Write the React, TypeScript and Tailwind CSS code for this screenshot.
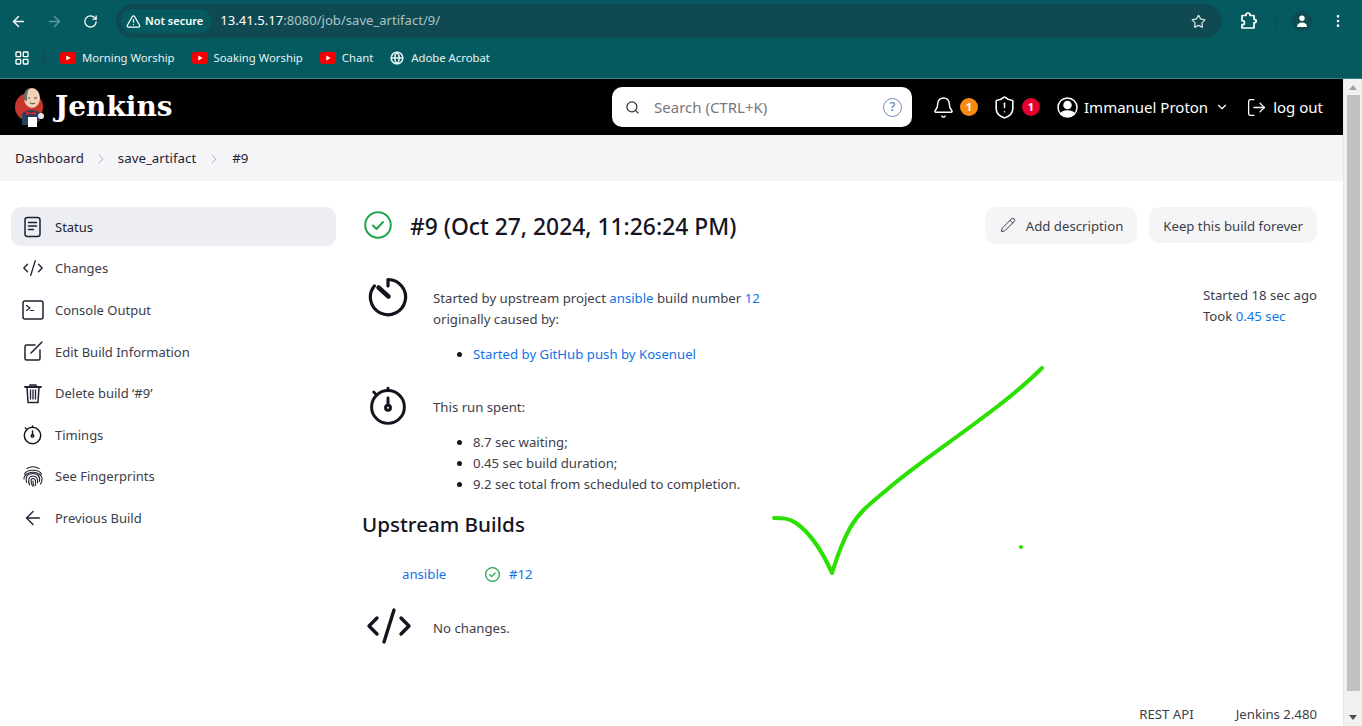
import { ArrowLeft, ArrowRight, RotateCw, TriangleAlert, Star, EllipsisVertical, LayoutGrid, Globe, Search, ChevronDown, ChevronRight, Bell, ShieldAlert, LogOut, CodeXml, Pencil } from 'lucide-react'

const font = "font-['Noto_Sans','Open_Sans',sans-serif]"

function YouTube() {
  return (
    <svg width="16" height="12" viewBox="0 0 16 12" className="shrink-0">
      <rect width="16" height="12" rx="3" fill="#f40000" />
      <path d="M6.3 3.4v5.2L10.6 6z" fill="#fff" />
    </svg>
  )
}

function Bookmark({ label }: { label: string }) {
  return (
    <div className="flex items-center gap-[6px] text-[11.3px] text-[#e6f2f2]">
      <YouTube />
      <span>{label}</span>
    </div>
  )
}

function Svg22({ children }: { children: React.ReactNode }) {
  return (
    <svg width="22" height="22" viewBox="0 0 22 22" fill="none" stroke="#1f2230" strokeWidth="1.500" strokeLinecap="round" strokeLinejoin="round">
      {children}
    </svg>
  )
}

function ConsoleIcon() {
  return (
    <Svg22>
      <rect x="1" y="2" width="20" height="18" rx="2" />
      <path d="M4.500 6.500 8 9 4.500 11.500M8.500 11.500h3" strokeWidth="1.200" />
    </Svg22>
  )
}

function StatusIcon() {
  return (
    <Svg22>
      <rect x="3" y="1.500" width="15" height="19" rx="2.500" />
      <path d="M6.500 6.500h8M6.500 10h8M6.500 13.500h5" />
    </Svg22>
  )
}

function EditIcon() {
  return (
    <Svg22>
      <path d="M13 5H4.500A1.500 1.500 0 0 0 3 6.500v12A1.500 1.500 0 0 0 4.500 20h12a1.500 1.500 0 0 0 1.500-1.500V10" />
      <path d="M9 13 20 2" />
    </Svg22>
  )
}

function TrashIcon() {
  return (
    <Svg22>
      <path d="M3 5h16" strokeWidth="1.800" />
      <path d="M8 5V3h6v2" />
      <path d="M5 5l1 15.500h10L17 5" />
      <path d="M8.500 8v9M11 8v9M13.500 8v9" strokeWidth="1.300" />
    </Svg22>
  )
}

function FingerprintIcon() {
  return (
    <Svg22>
      <g strokeWidth="1.100">
        <path d="M5 3.500c3.500-2 8.500-2 12 0" />
        <path d="M2.500 9C5 4 17 4 19.500 9" />
        <path d="M2 14c0-9 18-9 18 0 0 2-.5 4-1.500 5" />
        <path d="M4.500 17.500C3 10 7 8.500 11 8.500s7.500 2 6.500 8" />
        <path d="M7.500 20C5.500 15 7 11 11 11s5 3 4.500 7" />
        <path d="M10.500 21C8.500 17 8.500 13.500 11 13.500s3 3 2.500 7" />
        <path d="M11 16c0 2 .5 4 1 5" />
      </g>
    </Svg22>
  )
}

function Stopwatch({ size, stroke = 32 }: { size: number; stroke?: number }) {
  return (
    <svg width={size} height={size} viewBox="0 0 512 512" fill="none" stroke="#14141f" strokeWidth={stroke} strokeLinecap="round">
      <circle cx="256" cy="280" r="200" />
      <path d="M256 80V50M100 116l-18-18M256 170v90" />
      <circle cx="256" cy="290" r="30" />
    </svg>
  )
}

function Timer() {
  return (
    <svg width="42" height="42" viewBox="0 0 42 42" fill="none" stroke="#14141f" strokeWidth="3.200" strokeLinecap="round">
      <path d="M21 3.500a17.600 17.600 0 1 1-13.600 6.400" />
      <path d="M21 4v6" />
      <path d="M11.500 11.500 21.500 20.500" strokeWidth="4.500" />
    </svg>
  )
}

function SideItem({ icon, label, active }: { icon: React.ReactNode; label: string; active?: boolean }) {
  return (
    <div className={`flex h-[39px] items-center rounded-[10px] pl-[11px] text-[13px] ${active ? 'bg-[#eceef3] text-[#1f2230]' : 'text-[#3c3e4a]'}`}>
      <div className="flex w-[33px] justify-start">{icon}</div>
      <span className="mt-[2px]">{label}</span>
    </div>
  )
}

function CheckCircle({ size, w }: { size: number; w: number }) {
  return (
    <svg width={size} height={size} viewBox="0 0 28 28" fill="none" stroke="#1ea64b" strokeWidth={w} strokeLinecap="round" strokeLinejoin="round">
      <circle cx="14" cy="14" r="12.800" />
      <path d="M9 14.500l3.500 3.500 6.500-7" />
    </svg>
  )
}

export default function App() {
  const link = 'text-[#1173e6]'
  return (
    <div className={`${font} relative flex h-[726px] w-[1362px] flex-col overflow-hidden bg-white`}>
      {/* browser chrome */}
      <div className="h-[79px] shrink-0 border-b border-[#3c8287] bg-[#055a60] text-white">
        <div className="flex h-[41px] items-center pt-[1px]">
          <div className="flex w-[116px] items-center pl-[10px]">
            <ArrowLeft size={17} strokeWidth={2} />
            <ArrowRight size={17} strokeWidth={2} className="ml-[19px] text-[#5f9a9d]" />
            <RotateCw size={15} strokeWidth={2} className="ml-[20px]" />
          </div>
          <div className="flex h-[34px] w-[1106px] items-center rounded-full bg-[#0f4a52] pl-[5px] pr-[16px]">
            <div className="flex h-[24px] items-center gap-[4px] rounded-full bg-[#055a60] pl-[5px] pr-[8px] text-[11px] font-semibold">
              <TriangleAlert size={15} />
              <span>Not secure</span>
            </div>
            <span className="ml-[9px] text-[13.100px]">13.41.5.17<span className="text-[#a9c4c6]">:8080/job/save_artifact/9/</span></span>
            <Star size={15} className="ml-auto text-[#d6e2e3]" />
          </div>
          <div className="flex flex-1 items-center pl-[18px]">
            <svg width="18" height="18" viewBox="0 0 18 18" fill="none" stroke="#fff" strokeWidth="1.700" strokeLinejoin="round">
              <path d="M6 3.500V3a2 2 0 0 1 4 0v.5h4v3.800h.5a1.700 1.700 0 0 1 0 3.400H14V16H2v-3.300h.5a2 2 0 0 0 0-4H2V3.500z" />
            </svg>
            <div className="ml-[17px] h-[16px] w-px bg-[#0f4a52]" />
            <div className="ml-[16px] flex h-[20px] w-[20px] items-center justify-center rounded-full bg-[#0f4a52]">
              <svg width="12" height="12" viewBox="0 0 12 12" fill="#fff"><circle cx="6" cy="3.200" r="2.700" /><path d="M1 12c0-3 2-4.500 5-4.500s5 1.500 5 4.500z" /></svg>
            </div>
            <EllipsisVertical size={16} className="ml-[18px]" />
          </div>
        </div>
        <div className="flex h-[34px] items-center pl-[14px]">
          <LayoutGrid size={16} />
          <div className="ml-[14px] h-[16px] w-px bg-[#0f4a52]" />
          <div className="ml-[15px] flex items-center gap-[17px]">
            <Bookmark label="Morning Worship" />
            <Bookmark label="Soaking Worship" />
            <Bookmark label="Chant" />
            <div className="flex items-center gap-[7px] text-[11.3px] text-[#e6f2f2]">
              <Globe size={14} strokeWidth={2.500} />
              <span>Adobe Acrobat</span>
            </div>
          </div>
        </div>
      </div>

      <div className="flex min-h-0 flex-1">
        <div className="flex min-w-0 flex-1 flex-col">
          {/* jenkins header */}
          <div className="flex h-[56px] shrink-0 items-center bg-black pl-[15px] pr-[20px] text-white">
            <svg width="30" height="40" viewBox="0 0 30 40" className="shrink-0">
              <circle cx="14" cy="20" r="14" fill="#c8352d" />
              <ellipse cx="17" cy="11" rx="8" ry="10" fill="#f0d2bb" />
              <path d="M9 13C8 7 10 2 15 1c-3 3-3 8-3 13z" fill="#6a6a6a" />
              <path d="M13 11h2M19 11h3M15 16c2 1 4 1 5 0" stroke="#5a3a2a" strokeWidth="1" fill="none" />
              <path d="M7 38V27c3-5 15-5 18-1v8l-8 4z" fill="#24405e" />
              <path d="M11 24l5 2 5-2v4l-5-1-5 1z" fill="#d3262c" />
              <rect x="13" y="30" width="9" height="10" fill="#fff" />
              <circle cx="26" cy="29" r="3" fill="#e8e8e8" />
            </svg>
            <span className="ml-[10px] font-['DejaVu_Serif',serif] text-[28px] leading-none font-bold">Jenkins</span>
            <div className="ml-auto flex h-[40px] w-[300px] items-center rounded-[10px] bg-white pl-[13px] pr-[10px] text-[#777]">
              <Search size={15} className="text-[#333]" />
              <span className="ml-[14px] text-[15px]">Search (CTRL+K)</span>
              <div className="ml-auto flex h-[19px] w-[19px] items-center justify-center rounded-full border-[1.500px] border-[#6d8fb8] text-[12px] font-semibold text-[#6d8fb8]">?</div>
            </div>
            <Bell size={23} strokeWidth={1.500} className="ml-[20px]" />
            <div className="ml-[5px] flex h-[18px] w-[18px] items-center justify-center rounded-full bg-[#fb8a10] text-[11px] font-bold">1</div>
            <ShieldAlert size={25} strokeWidth={1.500} className="ml-[14px]" />
            <div className="ml-[5px] flex h-[18px] w-[18px] items-center justify-center rounded-full bg-[#e6002d] text-[11px] font-bold">1</div>
            <svg width="21" height="21" viewBox="0 0 21 21" className="ml-[17px]" fill="none" stroke="#fff" strokeWidth="1.500">
              <circle cx="10.500" cy="10.500" r="9.500" />
              <circle cx="10.500" cy="8" r="3.500" fill="#fff" />
              <path d="M4 17c1-4 12-4 13 0-3 3-10 3-13 0z" fill="#fff" />
            </svg>
            <span className="ml-[6px] text-[15px]">Immanuel Proton</span>
            <ChevronDown size={14} className="ml-[7px]" />
            <LogOut size={21} strokeWidth={1.500} className="ml-[17px]" />
            <span className="ml-[6px] text-[15px]">log out</span>
          </div>

          {/* breadcrumbs */}
          <div className="flex h-[46px] shrink-0 items-center bg-[#f5f5f7] pl-[15px] pt-[1px] text-[13.300px] text-[#1f2230]">
            <span>Dashboard</span>
            <ChevronRight size={16} strokeWidth={1.500} className="mx-[9px] text-[#a8b4c8]" />
            <span>save_artifact</span>
            <ChevronRight size={16} strokeWidth={1.500} className="mx-[10px] text-[#a8b4c8]" />
            <span>#9</span>
          </div>

          <div className="flex min-h-0 flex-1">
            {/* side panel */}
            <div className="w-[336px] shrink-0 pl-[11px] pt-[26px]">
              <div className="flex flex-col gap-[2.600px]">
                <SideItem active label="Status" icon={<StatusIcon />} />
                <SideItem label="Changes" icon={<CodeXml size={22} strokeWidth={1.500} className="text-[#1f2230]" />} />
                <SideItem label="Console Output" icon={<ConsoleIcon />} />
                <SideItem label="Edit Build Information" icon={<EditIcon />} />
                <SideItem label="Delete build ‘#9’" icon={<TrashIcon />} />
                <SideItem label="Timings" icon={<Stopwatch size={21} stroke={36} />} />
                <SideItem label="See Fingerprints" icon={<FingerprintIcon />} />
                <SideItem label="Previous Build" icon={<ArrowLeft size={22} strokeWidth={1.500} className="text-[#1f2230]" />} />
              </div>
            </div>

            {/* main */}
            <div className="relative min-w-0 flex-1 pl-[26px] pr-[26px] pt-[26px]">
              <div className="flex h-[36px] items-center">
                <div className="ml-[2px]"><CheckCircle size={28} w={2} /></div>
                <h1 className="ml-[18px] mt-[5px] text-[22.850px] font-medium text-[#14141f]">#9 (Oct 27, 2024, 11:26:24 PM)</h1>
                <div className="ml-auto flex h-[37px] items-center gap-[5px] rounded-[10px] bg-[#f5f5f7] pl-[15px] pr-[14px] text-[13.200px] text-[#3c3e4a]">
                  <Pencil size={16} strokeWidth={1.500} />
                  <span className="ml-[5px] mt-[3px]">Add description</span>
                </div>
                <div className="ml-[12px] flex h-[36px] items-center rounded-[10px] bg-[#f5f5f7] px-[14px] text-[13.200px] text-[#3c3e4a]"><span className="mt-[3px]">Keep this build forever</span></div>
              </div>

              <div className="mt-[33px] flex">
                <div className="w-[71px] shrink-0 pl-[5px]"><Timer /></div>
                <div className="flex-1 pt-[12px] text-[13.200px] leading-[21px] text-[#3c3e4a]">
                  <p>Started by upstream project <span className={link}>ansible</span> build number <span className={link}>12</span></p>
                  <p>originally caused by:</p>
                  <ul className="mt-[14px] list-disc pl-[40px] marker:text-[#14141f]">
                    <li className={link}>Started by GitHub push by Kosenuel</li>
                  </ul>
                </div>
                <div className="pt-[9px] text-[13.200px] leading-[21px] text-[#3c3e4a]">
                  <p>Started 18 sec ago</p>
                  <p>Took <span className={link}>0.45 sec</span></p>
                </div>
              </div>

              <div className="mt-[19px] flex">
                <div className="w-[71px] shrink-0 pl-[5px]"><Stopwatch size={42} stroke={36} /></div>
                <div className="flex-1 pt-[13px] text-[13.200px] leading-[21px] text-[#3c3e4a]">
                  <p>This run spent:</p>
                  <ul className="mt-[14px] list-disc pl-[40px] marker:text-[#14141f]">
                    <li>8.7 sec waiting;</li>
                    <li>0.45 sec build duration;</li>
                    <li>9.2 sec total from scheduled to completion.</li>
                  </ul>
                </div>
              </div>

              <h2 className="mt-[15px] text-[20.600px] leading-[28px] font-medium text-[#14141f]">Upstream Builds</h2>

              <div className="mt-[26.500px] flex h-[20px] items-center pl-[40px] text-[13.200px]">
                <span className={`w-[83px] ${link}`}>ansible</span>
                <CheckCircle size={15} w={2.400} />
                <span className={`ml-[9px] ${link}`}>#12</span>
              </div>

              <div className="mt-[17px] flex items-center">
                <div className="w-[71px] shrink-0 pl-[3px]"><CodeXml size={48} strokeWidth={1.700} className="text-[#14141f]" /></div>
                <span className="mt-[6px] text-[13.200px] text-[#3c3e4a]">No changes.</span>
              </div>

              <div className="absolute right-[26px] bottom-[1px] flex gap-[42px] text-[13.200px] text-[#3c3e4a]">
                <span>REST API</span>
                <span>Jenkins 2.480</span>
              </div>
            </div>
          </div>
        </div>

        {/* scrollbar */}
        <div className="flex w-[19px] shrink-0 flex-col items-center border-l border-[#e8e8e8] bg-[#f1f1f1]">
          <div className="mt-[6px] h-0 w-0 border-x-[4px] border-b-[5px] border-x-transparent border-b-[#a3a3a3]" />
          <div className="mt-[5px] h-[596px] w-[13px] bg-[#c1c1c1]" />
          <div className="mt-auto mb-[6px] h-0 w-0 border-x-[4px] border-t-[5px] border-x-transparent border-t-[#505050]" />
        </div>
      </div>

      {/* hand drawn tick over the page */}
      <svg className="pointer-events-none absolute left-[760px] top-[360px]" width="300" height="225" viewBox="0 0 300 225" fill="none" stroke="#2ae000" strokeWidth="4" strokeLinecap="round" strokeLinejoin="round">
        <path d="M14 158c8 0 15 0 22 5 17 12 28 32 36 50l0 0c3-9 8-27 18-45 10-18 25-28 40-41C170 93 240 50 282 8" />
        <circle cx="261" cy="187" r="2" fill="#2ae000" stroke="none" />
      </svg>
    </div>
  )
}
